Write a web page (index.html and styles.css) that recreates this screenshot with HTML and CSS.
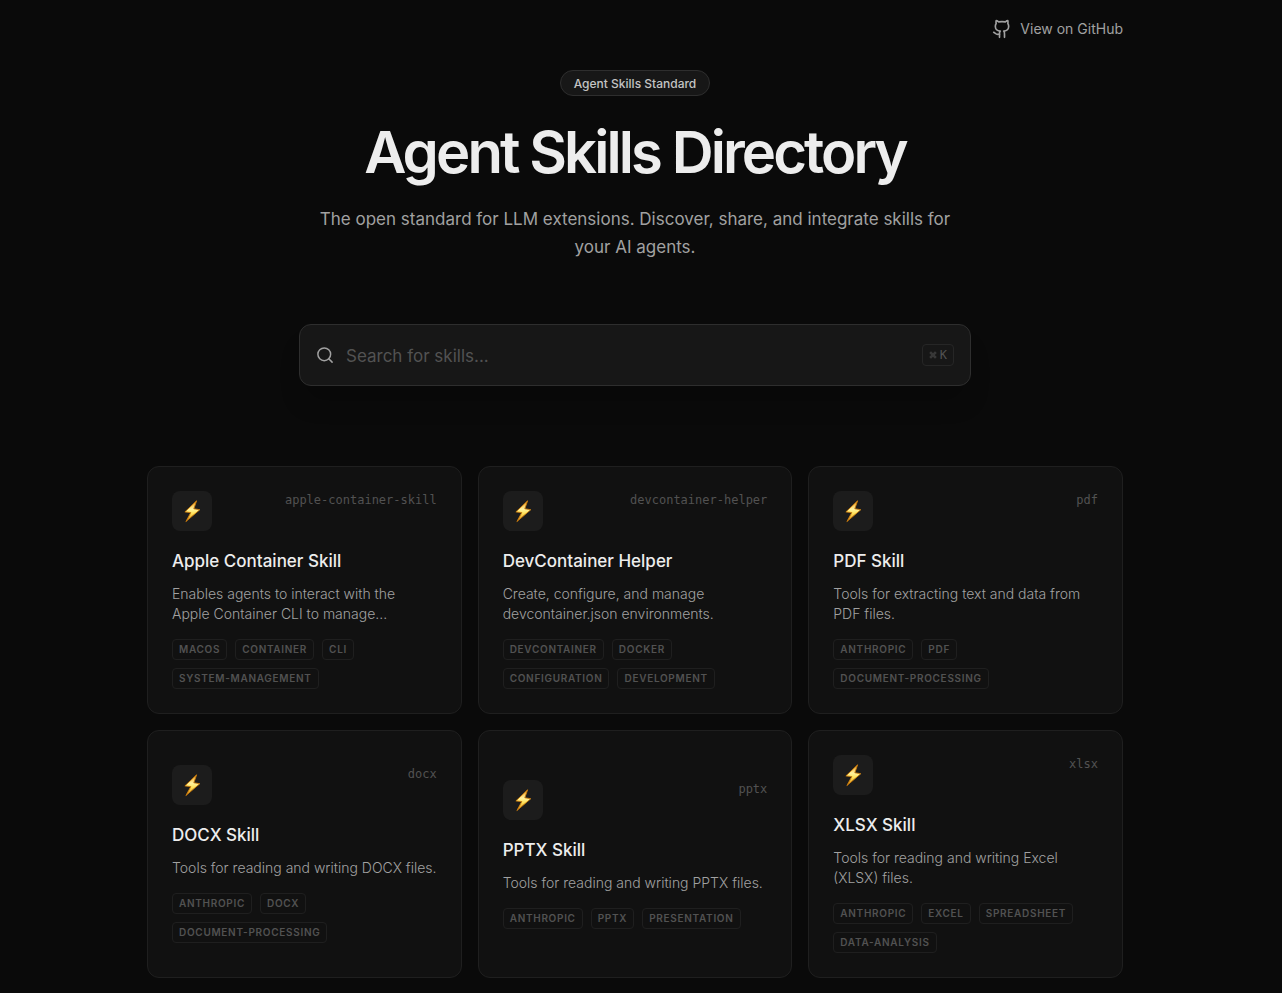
FILE: index.html
```
<!DOCTYPE html>
<html lang="en">
<head>
<meta charset="utf-8">
<meta name="viewport" content="width=device-width, initial-scale=1">
<title>Agent Skills Directory</title>
<link rel="stylesheet" href="styles.css">
</head>
<body>
<svg class="defs" aria-hidden="true">
  <defs>
    <linearGradient id="bolt-fill" x1="0" y1="0" x2="0" y2="1">
      <stop offset="0" stop-color="#f09a12"/>
      <stop offset="0.4" stop-color="#fff3a0"/>
      <stop offset="0.6" stop-color="#ffe45c"/>
      <stop offset="1" stop-color="#d97e08"/>
    </linearGradient>
    <symbol id="bolt" viewBox="0 0 20 24">
      <path d="M14.600 1.800 2.900 12.900l5.900.700L3.900 22.600 17.800 10.700l-6-.900z" fill="url(#bolt-fill)" stroke="#c97a0c" stroke-width="0.9" stroke-linejoin="round"/>
    </symbol>
  </defs>
</svg>
<div class="page">
  <header class="topbar">
    <a class="github" href="#">
      <svg class="github-icon" viewBox="0 0 24 24" aria-hidden="true"><path d="M15 22v-4a4.800 4.800 0 0 0-1-3.500c3 0 6-2 6-5.500.080-1.250-.270-2.480-1-3.500.280-1.150.280-2.350 0-3.500 0 0-1 0-3 1.500-2.640-.500-5.360-.500-8 0C6 2 5 2 5 2c-.300 1.150-.300 2.350 0 3.500A5.400 5.400 0 0 0 4 9c0 3.500 3 5.500 6 5.500-.390.490-.680 1.050-.850 1.650-.170.600-.220 1.230-.150 1.850v4"/><path d="M9 18c-4.510 2-5-2-7-2"/></svg>
      View on GitHub
    </a>
  </header>

  <main>
    <section class="hero">
      <span class="badge">Agent Skills Standard</span>
      <h1 class="title">Agent Skills Directory</h1>
      <p class="subtitle">The open standard for LLM extensions. Discover, share, and integrate skills for your AI agents.</p>
    </section>

    <div class="search">
      <svg class="search-icon" viewBox="0 0 24 24" aria-hidden="true"><circle cx="11" cy="11" r="8.500"/><path d="m21.500 21.500-4.500-4.500"/></svg>
      <input class="search-input" type="text" placeholder="Search for skills..." aria-label="Search for skills">
      <kbd class="key"><svg class="command" viewBox="0 0 24 24" aria-hidden="true"><path d="M15 6v12a3 3 0 1 0 3-3H6a3 3 0 1 0 3 3V6a3 3 0 1 0-3 3h12a3 3 0 1 0-3-3"/></svg>K</kbd>
    </div>

    <section class="grid" aria-label="Skills">
      <button class="card" type="button">
        <span class="card-head"><span class="tile"><svg class="bolt"><use href="#bolt"/></svg></span><span class="slug">apple-container-skill</span></span>
        <span class="name">Apple Container Skill</span>
        <span class="desc">Enables agents to interact with the Apple Container CLI to manage...</span>
        <span class="tags"><span class="tag">macos</span><span class="tag">container</span><span class="tag">cli</span><span class="tag">system-management</span></span>
      </button>
      <button class="card" type="button">
        <span class="card-head"><span class="tile"><svg class="bolt"><use href="#bolt"/></svg></span><span class="slug">devcontainer-helper</span></span>
        <span class="name">DevContainer Helper</span>
        <span class="desc">Create, configure, and manage devcontainer.json environments.</span>
        <span class="tags"><span class="tag">devcontainer</span><span class="tag">docker</span><span class="tag">configuration</span><span class="tag">development</span></span>
      </button>
      <button class="card" type="button">
        <span class="card-head"><span class="tile"><svg class="bolt"><use href="#bolt"/></svg></span><span class="slug">pdf</span></span>
        <span class="name">PDF Skill</span>
        <span class="desc">Tools for extracting text and data from PDF files.</span>
        <span class="tags"><span class="tag">anthropic</span><span class="tag">pdf</span><span class="tag">document-processing</span></span>
      </button>
      <button class="card" type="button">
        <span class="card-head"><span class="tile"><svg class="bolt"><use href="#bolt"/></svg></span><span class="slug">docx</span></span>
        <span class="name">DOCX Skill</span>
        <span class="desc">Tools for reading and writing DOCX files.</span>
        <span class="tags"><span class="tag">anthropic</span><span class="tag">docx</span><span class="tag">document-processing</span></span>
      </button>
      <button class="card" type="button">
        <span class="card-head"><span class="tile"><svg class="bolt"><use href="#bolt"/></svg></span><span class="slug">pptx</span></span>
        <span class="name">PPTX Skill</span>
        <span class="desc">Tools for reading and writing PPTX files.</span>
        <span class="tags"><span class="tag">anthropic</span><span class="tag">pptx</span><span class="tag">presentation</span></span>
      </button>
      <button class="card" type="button">
        <span class="card-head"><span class="tile"><svg class="bolt"><use href="#bolt"/></svg></span><span class="slug">xlsx</span></span>
        <span class="name">XLSX Skill</span>
        <span class="desc">Tools for reading and writing Excel (XLSX) files.</span>
        <span class="tags"><span class="tag">anthropic</span><span class="tag">excel</span><span class="tag">spreadsheet</span><span class="tag">data-analysis</span></span>
      </button>
    </section>
  </main>
</div>
</body>
</html>
```

FILE: styles.css
```
* { box-sizing: border-box; }

body {
  margin: 0;
  padding-right: 12px;
  background: #0a0a0a;
  color: #ededed;
  font-family: Inter, "Liberation Sans", sans-serif;
  -webkit-font-smoothing: antialiased;
}

.defs { display: block; width: 0; height: 0; }

.page {
  max-width: 1024px;
  margin: 0 auto;
  padding: 0 24px 15px;
}

.topbar {
  display: flex;
  justify-content: flex-end;
  padding: 19px 0 0;
}

.github {
  display: flex;
  align-items: center;
  gap: 8px;
  color: #a1a1a1;
  font-size: 14px;
  font-weight: 400;
  line-height: 20px;
  text-decoration: none;
}

.github-icon {
  width: 20px;
  height: 20px;
  fill: none;
  stroke: currentColor;
  stroke-width: 2;
  stroke-linecap: round;
  stroke-linejoin: round;
}

.hero {
  display: flex;
  flex-direction: column;
  align-items: center;
  padding-top: 31px;
  text-align: center;
}

.badge {
  padding: 5px 13px 3px;
  border: 1px solid #2e2e2e;
  border-radius: 13px;
  background: #171717;
  color: #c4c4c4;
  font-size: 12px;
  font-weight: 500;
  line-height: 16px;
}

.title {
  margin: 26px 0 23px;
  font-size: 58px;
  font-weight: 600;
  line-height: 60px;
  letter-spacing: -0.05em;
}

.subtitle {
  max-width: 672px;
  margin: 0;
  padding: 0 16px;
  color: #a1a1a1;
  font-size: 17px;
  font-weight: 400;
  line-height: 28px;
}

.search {
  display: flex;
  align-items: center;
  gap: 12px;
  max-width: 672px;
  margin: 63px auto 80px;
  padding: 16px;
  border: 1px solid #2e2e2e;
  border-radius: 12px;
  background: #171717;
  box-shadow: 0 20px 25px -5px rgba(0, 0, 0, 0.2);
}

.search-icon {
  flex: none;
  width: 18px;
  height: 18px;
  fill: none;
  stroke: #a1a1a1;
  stroke-width: 2;
  stroke-linecap: round;
}

.search-input {
  flex: 1;
  min-width: 0;
  height: 28px;
  padding: 2px 0 0;
  border: 0;
  outline: 0;
  background: transparent;
  color: #ededed;
  font: 400 17px/26px Inter, "Liberation Sans", sans-serif;
}

.search-input::placeholder { color: #525252; opacity: 1; }

.key {
  display: flex;
  align-items: center;
  gap: 3px;
  height: 22px;
  padding: 0 6px;
  border: 1px solid #262626;
  border-radius: 4px;
  color: #525252;
  font: 12px/16px "DejaVu Sans Mono", "Liberation Mono", monospace;
}

.command {
  width: 8px;
  height: 8px;
  fill: none;
  stroke: currentColor;
  stroke-width: 2;
}

.grid {
  display: grid;
  grid-template-columns: repeat(auto-fit, minmax(280px, 1fr));
  grid-auto-rows: 1fr;
  gap: 16px;
}

.card {
  display: flex;
  flex-direction: column;
  justify-content: center;
  padding: 24px;
  border: 1px solid #1f1f1f;
  border-radius: 12px;
  background: #111111;
  color: #ededed;
  font-family: inherit;
  text-align: left;
}

.card-head {
  display: flex;
  justify-content: space-between;
  margin-bottom: 16px;
}

.tile {
  display: grid;
  place-items: center;
  width: 40px;
  height: 40px;
  border-radius: 8px;
  background: #1c1c1c;
}

.bolt { width: 20px; height: 24px; }

.slug {
  color: #525252;
  font: 12px/18px "DejaVu Sans Mono", "Liberation Mono", monospace;
}

.name {
  margin-bottom: 8px;
  font-size: 17px;
  font-weight: 500;
  line-height: 29px;
}

.desc {
  margin-bottom: 15px;
  color: #a1a1a1;
  font-size: 14px;
  font-weight: 300;
  line-height: 20px;
}

.tags {
  display: flex;
  flex-wrap: wrap;
  gap: 8px;
}

.tag {
  padding: 2px 6px;
  border: 1px solid #1f1f1f;
  border-radius: 4px;
  color: #525252;
  font-size: 10px;
  font-weight: 600;
  line-height: 15px;
  letter-spacing: 0.07em;
  text-transform: uppercase;
}
```
